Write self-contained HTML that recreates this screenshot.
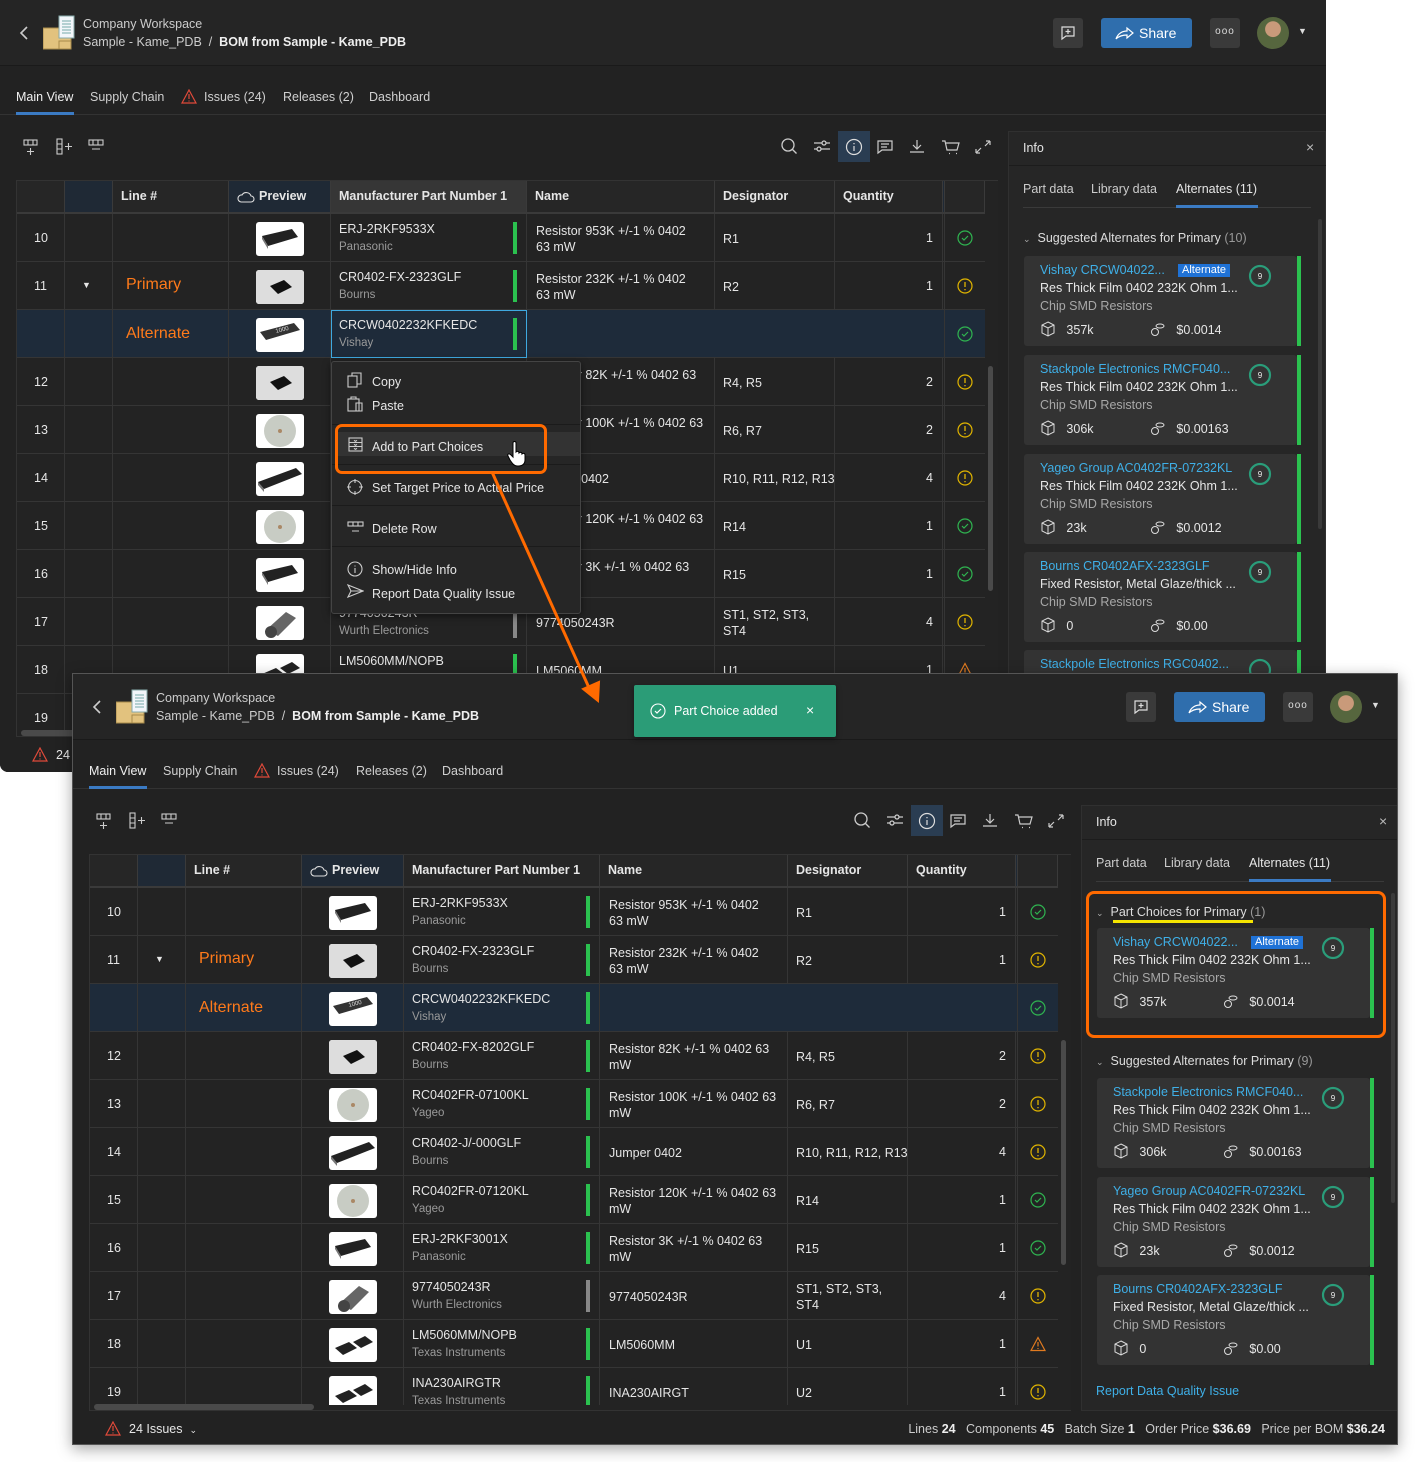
<!DOCTYPE html>
<html><head><meta charset="utf-8">
<style>
*{box-sizing:border-box;margin:0;padding:0}
body{width:1415px;height:1462px;background:#fff;position:relative;overflow:hidden;font-family:"Liberation Sans",sans-serif;font-size:12.5px;color:#e6e6e6}
.win{position:absolute;width:1326px;height:772px;background:#222;overflow:hidden}
.a{position:absolute;white-space:nowrap}
.hdr{position:absolute;left:0;top:0;width:1326px;height:66px;background:#252525;border-bottom:1px solid #1a1a1a}
.btn{position:absolute;top:18px;height:30px;border-radius:3px;background:#3a3a3a}
.tabs span{position:absolute;top:90px;color:#d0d0d0;font-size:12.5px}
.tbl{position:absolute;left:16px;top:180px;width:982px;height:557px;border:1px solid #333;border-right:none;background:#232323}
.th{position:absolute;top:0;height:33px;border-right:1px solid #3a3a3a;border-bottom:2px solid #3a3a3a;background:#262626;font-weight:bold;font-size:12.5px;line-height:31px;padding-left:8px}
.body{position:absolute;left:0;top:33px;width:968px;height:517px;overflow:hidden}
.r{position:absolute;left:0;width:968px;height:48px;border-bottom:1px solid #353535}
.r.sel{background:#1e2b3a}
.c{position:absolute;top:0;height:48px;border-right:1px solid #353535}
.num{position:absolute;left:17px;top:17px}
.mp{position:absolute;left:322px;top:8px;font-size:12.5px}
.mf{position:absolute;left:322px;top:27px;font-size:11.5px;color:#9a9a9a}
.bar{position:absolute;left:496px;top:8px;width:4px;height:32px;background:#2bc14f}
.nm{position:absolute;left:519px;font-size:12.5px;line-height:16px}
.ds{position:absolute;left:706px;font-size:12.5px;line-height:16px}
.qt{position:absolute;left:826px;width:90px;text-align:right;top:17px}
.st{position:absolute;left:940px;top:16px}
.th-img{position:absolute;left:239px;top:8px;width:48px;height:34px;background:#fff;border-radius:3px;overflow:hidden}
.pnl{position:absolute;left:1008px;top:131px;width:318px;height:606px;background:#262626;border:1px solid #303030}
.card{position:absolute;left:15px;width:273px;height:90px;background:#333;border-radius:3px}
.card .g{position:absolute;right:-4px;top:0;width:4px;height:100%;background:#2bc14f}
.card .t{position:absolute;left:16px;top:7px;color:#3fb0e8;font-size:12.5px}
.card .d{position:absolute;left:16px;top:25px;font-size:12.5px}
.card .k{position:absolute;left:16px;top:43px;color:#a8a8a8;font-size:12.5px}
.card .b{position:absolute;left:154px;top:8px;background:#1f72d6;color:#fff;font-size:11px;padding:0 4px;line-height:13px}
.card .s{position:absolute;left:224px;top:8px}
.card .q{position:absolute;left:16px;top:65px}
.ft{position:absolute;left:0;top:737px;width:1326px;height:35px;background:#222}
</style></head><body>

<!-- ================= WINDOW 1 ================= -->
<div class="win" style="left:0;top:0;border-bottom-left-radius:8px">
 <div class="hdr">
  <svg class="a" style="left:18px;top:25px" width="12" height="16"><path d="M9 2 L3 8 L9 14" stroke="#ccc" stroke-width="1.6" fill="none"/></svg>
  <svg class="a" style="left:43px;top:15px" width="34" height="36"><rect x="0" y="13" width="28" height="21" fill="#e2c27e" stroke="#a88a4a"/><rect x="16" y="26" width="12" height="8" fill="#e2c27e" stroke="#a88a4a"/><rect x="16" y="1" width="15" height="22" fill="#f2f6fa" stroke="#8aa"/><path d="M19 6h9M19 9h9M19 12h9M19 15h9M19 18h9" stroke="#7aa" stroke-width="1"/></svg>
  <div class="a" style="left:83px;top:17px;color:#ccc">Company Workspace</div>
  <div class="a" style="left:83px;top:35px;color:#ccc">Sample - Kame_PDB &nbsp;/&nbsp; <b style="color:#eee">BOM from Sample - Kame_PDB</b></div>
  <div class="btn" style="left:1053px;width:30px"><svg style="margin:7px" width="16" height="16"><path d="M2 2h12v9H6l-4 3z" stroke="#ddd" fill="none" stroke-width="1.2"/><path d="M8 4v5M5.5 6.5h5" stroke="#ddd" stroke-width="1.2"/></svg></div>
  <div class="btn" style="left:1101px;width:91px;background:#2f6ead;color:#fff;font-size:14px;line-height:30px;padding-left:38px">Share<svg class="a" style="left:14px;top:8px" width="20" height="14"><path d="M1 13c2-6 7-8 11-8V2l6 5-6 5V9c-4 0-8 1-11 4z" stroke="#fff" fill="none" stroke-width="1.2"/></svg></div>
  <div class="btn" style="left:1210px;width:30px;color:#ddd;text-align:center;line-height:28px;font-size:10px;letter-spacing:1px">ooo</div>
  <div class="a" style="left:1257px;top:17px;width:32px;height:32px;border-radius:50%;background:radial-gradient(circle at 50% 38%,#c99a7a 0 30%,#56663e 32% 100%)"></div>
  <div class="a" style="left:1298px;top:26px;font-size:9px;color:#ddd">▼</div>
 </div>
 <div class="tabs">
  <span style="left:16px;color:#f0f0f0">Main View</span>
  <span style="left:90px">Supply Chain</span>
  <svg class="a" style="left:181px;top:89px" width="16" height="15"><path d="M8 1L15 14H1z" stroke="#e04a3a" fill="none" stroke-width="1.2"/><path d="M8 5v5M8 11.5v1" stroke="#e04a3a" stroke-width="1.2"/></svg>
  <span style="left:204px">Issues (24)</span>
  <span style="left:283px">Releases (2)</span>
  <span style="left:369px">Dashboard</span>
 </div>
 <div class="a" style="left:0;top:114px;width:1326px;height:1px;background:#333"></div>
 <div class="a" style="left:16px;top:112px;width:58px;height:3px;background:#3b7bc4"></div>
 <!-- toolbar -->
 <svg class="a" style="left:22px;top:138px" width="90" height="18" stroke="#ccc" fill="none" stroke-width="1.1"><rect x="2" y="2" width="13" height="5"/><path d="M6 2v5M11 2v5M8.5 10v7M5 13.5h7"/><rect x="35" y="1" width="5" height="15"/><path d="M35 6h5M35 11h5M43 8.5h7M46.5 5v7"/><rect x="67" y="2" width="14" height="5"/><path d="M71 2v5M76 2v5M70 11h8"/></svg>
 <svg class="a" style="left:780px;top:137px" width="215" height="20" stroke="#ccc" fill="none" stroke-width="1.3">
  <circle cx="8" cy="8" r="6"/><path d="M12.5 12.5l4 4"/>
  <path d="M34 6h16M34 12h16"/><circle cx="44" cy="6" r="2" fill="#222"/><circle cx="39" cy="12" r="2" fill="#222"/>
 </svg>
 <div class="a" style="left:838px;top:131px;width:32px;height:31px;background:#2a3d52"></div>
 <svg class="a" style="left:845px;top:138px" width="18" height="18" stroke="#ddd" fill="none" stroke-width="1.2"><circle cx="9" cy="9" r="7.5"/><path d="M9 8v5M9 5v1.2"/></svg>
 <svg class="a" style="left:876px;top:138px" width="120" height="18" stroke="#ccc" fill="none" stroke-width="1.2"><path d="M2 3h14v9H6l-4 3zM5 6h8M5 9h6"/><path d="M41 2v9M37 7l4 4 4-4M34 14h14"/><path d="M66 3h3l2 9h10l2-7H70M73 15.5h1M80 15.5h1"/><path d="M100 15l5-5M100 15v-4M100 15h4M114 3l-5 5M114 3v4M114 3h-4"/></svg>

 <!-- table -->
 <div class="tbl">
  <div class="th" style="left:0;width:48px"></div>
  <div class="th" style="left:48px;width:48px;background:#1f2935"></div>
  <div class="th" style="left:96px;width:116px;padding-left:8px">Line #</div>
  <div class="th" style="left:212px;width:102px;background:#1f2935;padding-left:30px">Preview<svg class="a" style="left:8px;top:9px" width="18" height="14"><path d="M4 12h10a3 3 0 0 0 0-6 5 5 0 0 0-9-1 3.5 3.5 0 0 0-1 7z" stroke="#ddd" fill="none" stroke-width="1.1"/></svg></div>
  <div class="th" style="left:314px;width:196px;background:#363636">Manufacturer Part Number 1</div>
  <div class="th" style="left:510px;width:188px">Name</div>
  <div class="th" style="left:698px;width:120px">Designator</div>
  <div class="th" style="left:818px;width:108px">Quantity</div>
  <div class="th" style="left:926px;width:2px;background:#1f2935;padding:0"></div>
  <div class="th" style="left:928px;width:40px"></div>
  <div class="body">
   <div class="r" style="top:0"><div class="c" style="left:0;width:48px"></div><div class="c" style="left:48px;width:48px"></div><div class="c" style="left:96px;width:116px"></div><div class="c" style="left:212px;width:102px"></div><div class="c" style="left:314px;width:196px"></div><div class="c" style="left:510px;width:188px"></div><div class="c" style="left:698px;width:120px"></div><div class="c" style="left:818px;width:108px"></div><div class="c" style="left:926px;width:2px"></div>
    <span class="num">10</span><div class="th-img"><svg width="48" height="34"><path d="M6 14l30-7 6 8-30 9z" fill="#222"/><path d="M6 14l6 10v3L6 17z" fill="#777"/></svg></div><span class="mp">ERJ-2RKF9533X</span><span class="mf">Panasonic</span><div class="bar"></div><span class="nm" style="top:9px">Resistor 953K +/-1 % 0402<br>63 mW</span><span class="ds" style="top:17px">R1</span><span class="qt">1</span><svg class="st" width="16" height="16"><circle cx="8" cy="8" r="7" stroke="#2fb450" fill="none" stroke-width="1.2"/><path d="M5 8l2 2 4-4" stroke="#2fb450" fill="none" stroke-width="1.2"/></svg></div>
   <div class="r" style="top:48px"><div class="c" style="left:0;width:48px"></div><div class="c" style="left:48px;width:48px"></div><div class="c" style="left:96px;width:116px"></div><div class="c" style="left:212px;width:102px"></div><div class="c" style="left:314px;width:196px"></div><div class="c" style="left:510px;width:188px"></div><div class="c" style="left:698px;width:120px"></div><div class="c" style="left:818px;width:108px"></div><div class="c" style="left:926px;width:2px"></div>
    <span class="num">11</span><span class="a" style="left:65px;top:18px;font-size:9px">▼</span><span class="a" style="left:109px;top:14px;color:#ff7a1a;font-size:16px">Primary</span><div class="th-img"><svg width="48" height="34"><rect width="48" height="34" fill="#ddd"/><path d="M14 16l14-6 8 7-14 7z" fill="#111"/></svg></div><span class="mp">CR0402-FX-2323GLF</span><span class="mf">Bourns</span><div class="bar"></div><span class="nm" style="top:9px">Resistor 232K +/-1 % 0402<br>63 mW</span><span class="ds" style="top:17px">R2</span><span class="qt">1</span><svg class="st" width="16" height="16"><circle cx="8" cy="8" r="7" stroke="#e0b400" fill="none" stroke-width="1.2"/><path d="M8 4v5M8 11v1.2" stroke="#e0b400" stroke-width="1.3"/></svg></div>
   <div class="r sel" style="top:96px"><div class="c" style="left:0;width:48px"></div><div class="c" style="left:48px;width:48px"></div><div class="c" style="left:96px;width:116px"></div><div class="c" style="left:212px;width:102px"></div><div class="c" style="left:314px;width:196px;border:1px solid #3fa9e0"></div><div class="c" style="left:926px;width:2px"></div>
    <span class="a" style="left:109px;top:15px;color:#ff7a1a;font-size:16px">Alternate</span><div class="th-img"><svg width="48" height="34"><path d="M4 14l34-9 6 7-34 10z" fill="#333"/><text x="20" y="15" font-size="6" fill="#ddd" transform="rotate(-14 20 15)" font-family="Liberation Sans">1000</text></svg></div><span class="mp">CRCW0402232KFKEDC</span><span class="mf">Vishay</span><div class="bar"></div><svg class="st" width="16" height="16"><circle cx="8" cy="8" r="7" stroke="#2fb450" fill="none" stroke-width="1.2"/><path d="M5 8l2 2 4-4" stroke="#2fb450" fill="none" stroke-width="1.2"/></svg></div>
   <div class="r" style="top:144px"><div class="c" style="left:0;width:48px"></div><div class="c" style="left:48px;width:48px"></div><div class="c" style="left:96px;width:116px"></div><div class="c" style="left:212px;width:102px"></div><div class="c" style="left:314px;width:196px"></div><div class="c" style="left:510px;width:188px"></div><div class="c" style="left:698px;width:120px"></div><div class="c" style="left:818px;width:108px"></div><div class="c" style="left:926px;width:2px"></div>
    <span class="num">12</span><div class="th-img"><svg width="48" height="34"><rect width="48" height="34" fill="#ddd"/><path d="M14 16l14-6 8 7-14 7z" fill="#111"/></svg></div><span class="mp">CR0402-FX-8202GLF</span><span class="mf">Bourns</span><div class="bar"></div><span class="nm" style="top:9px">Resistor 82K +/-1 % 0402 63<br>mW</span><span class="ds" style="top:17px">R4, R5</span><span class="qt">2</span><svg class="st" width="16" height="16"><circle cx="8" cy="8" r="7" stroke="#e0b400" fill="none" stroke-width="1.2"/><path d="M8 4v5M8 11v1.2" stroke="#e0b400" stroke-width="1.3"/></svg></div>
   <div class="r" style="top:192px"><div class="c" style="left:0;width:48px"></div><div class="c" style="left:48px;width:48px"></div><div class="c" style="left:96px;width:116px"></div><div class="c" style="left:212px;width:102px"></div><div class="c" style="left:314px;width:196px"></div><div class="c" style="left:510px;width:188px"></div><div class="c" style="left:698px;width:120px"></div><div class="c" style="left:818px;width:108px"></div><div class="c" style="left:926px;width:2px"></div>
    <span class="num">13</span><div class="th-img"><svg width="48" height="34"><circle cx="24" cy="17" r="16" fill="#c8ccc4"/><circle cx="24" cy="17" r="2" fill="#a86"/></svg></div><span class="mp">RC0402FR-07100KL</span><span class="mf">Yageo</span><div class="bar"></div><span class="nm" style="top:9px">Resistor 100K +/-1 % 0402 63<br>mW</span><span class="ds" style="top:17px">R6, R7</span><span class="qt">2</span><svg class="st" width="16" height="16"><circle cx="8" cy="8" r="7" stroke="#e0b400" fill="none" stroke-width="1.2"/><path d="M8 4v5M8 11v1.2" stroke="#e0b400" stroke-width="1.3"/></svg></div>
   <div class="r" style="top:240px"><div class="c" style="left:0;width:48px"></div><div class="c" style="left:48px;width:48px"></div><div class="c" style="left:96px;width:116px"></div><div class="c" style="left:212px;width:102px"></div><div class="c" style="left:314px;width:196px"></div><div class="c" style="left:510px;width:188px"></div><div class="c" style="left:698px;width:120px"></div><div class="c" style="left:818px;width:108px"></div><div class="c" style="left:926px;width:2px"></div>
    <span class="num">14</span><div class="th-img"><svg width="48" height="34"><path d="M2 20l38-14 6 6-38 15z" fill="#222"/><path d="M2 20l6 7v3L2 23z" fill="#777"/></svg></div><span class="mp">CR0402-J/-000GLF</span><span class="mf">Bourns</span><div class="bar"></div><span class="nm" style="top:17px">Jumper 0402</span><span class="ds" style="top:17px">R10, R11, R12, R13</span><span class="qt">4</span><svg class="st" width="16" height="16"><circle cx="8" cy="8" r="7" stroke="#e0b400" fill="none" stroke-width="1.2"/><path d="M8 4v5M8 11v1.2" stroke="#e0b400" stroke-width="1.3"/></svg></div>
   <div class="r" style="top:288px"><div class="c" style="left:0;width:48px"></div><div class="c" style="left:48px;width:48px"></div><div class="c" style="left:96px;width:116px"></div><div class="c" style="left:212px;width:102px"></div><div class="c" style="left:314px;width:196px"></div><div class="c" style="left:510px;width:188px"></div><div class="c" style="left:698px;width:120px"></div><div class="c" style="left:818px;width:108px"></div><div class="c" style="left:926px;width:2px"></div>
    <span class="num">15</span><div class="th-img"><svg width="48" height="34"><circle cx="24" cy="17" r="16" fill="#c8ccc4"/><circle cx="24" cy="17" r="2" fill="#a86"/></svg></div><span class="mp">RC0402FR-07120KL</span><span class="mf">Yageo</span><div class="bar"></div><span class="nm" style="top:9px">Resistor 120K +/-1 % 0402 63<br>mW</span><span class="ds" style="top:17px">R14</span><span class="qt">1</span><svg class="st" width="16" height="16"><circle cx="8" cy="8" r="7" stroke="#2fb450" fill="none" stroke-width="1.2"/><path d="M5 8l2 2 4-4" stroke="#2fb450" fill="none" stroke-width="1.2"/></svg></div>
   <div class="r" style="top:336px"><div class="c" style="left:0;width:48px"></div><div class="c" style="left:48px;width:48px"></div><div class="c" style="left:96px;width:116px"></div><div class="c" style="left:212px;width:102px"></div><div class="c" style="left:314px;width:196px"></div><div class="c" style="left:510px;width:188px"></div><div class="c" style="left:698px;width:120px"></div><div class="c" style="left:818px;width:108px"></div><div class="c" style="left:926px;width:2px"></div>
    <span class="num">16</span><div class="th-img"><svg width="48" height="34"><path d="M6 14l30-7 6 8-30 9z" fill="#222"/><path d="M6 14l6 10v3L6 17z" fill="#777"/></svg></div><span class="mp">ERJ-2RKF3001X</span><span class="mf">Panasonic</span><div class="bar"></div><span class="nm" style="top:9px">Resistor 3K +/-1 % 0402 63<br>mW</span><span class="ds" style="top:17px">R15</span><span class="qt">1</span><svg class="st" width="16" height="16"><circle cx="8" cy="8" r="7" stroke="#2fb450" fill="none" stroke-width="1.2"/><path d="M5 8l2 2 4-4" stroke="#2fb450" fill="none" stroke-width="1.2"/></svg></div>
   <div class="r" style="top:384px"><div class="c" style="left:0;width:48px"></div><div class="c" style="left:48px;width:48px"></div><div class="c" style="left:96px;width:116px"></div><div class="c" style="left:212px;width:102px"></div><div class="c" style="left:314px;width:196px"></div><div class="c" style="left:510px;width:188px"></div><div class="c" style="left:698px;width:120px"></div><div class="c" style="left:818px;width:108px"></div><div class="c" style="left:926px;width:2px"></div>
    <span class="num">17</span><div class="th-img"><svg width="48" height="34"><path d="M10 24l20-18 10 6-18 18z" fill="#666"/><ellipse cx="15" cy="26" rx="6" ry="6" fill="#444"/></svg></div><span class="mp">9774050243R</span><span class="mf">Wurth Electronics</span><div class="bar" style="background:#888"></div><span class="nm" style="top:17px">9774050243R</span><span class="ds" style="top:9px">ST1, ST2, ST3,<br>ST4</span><span class="qt">4</span><svg class="st" width="16" height="16"><circle cx="8" cy="8" r="7" stroke="#e0b400" fill="none" stroke-width="1.2"/><path d="M8 4v5M8 11v1.2" stroke="#e0b400" stroke-width="1.3"/></svg></div>
   <div class="r" style="top:432px"><div class="c" style="left:0;width:48px"></div><div class="c" style="left:48px;width:48px"></div><div class="c" style="left:96px;width:116px"></div><div class="c" style="left:212px;width:102px"></div><div class="c" style="left:314px;width:196px"></div><div class="c" style="left:510px;width:188px"></div><div class="c" style="left:698px;width:120px"></div><div class="c" style="left:818px;width:108px"></div><div class="c" style="left:926px;width:2px"></div>
    <span class="num">18</span><div class="th-img"><svg width="48" height="34"><path d="M6 20l14-6 8 6-14 7z" fill="#222"/><path d="M24 14l12-6 8 6-12 6z" fill="#222"/></svg></div><span class="mp">LM5060MM/NOPB</span><span class="mf">Texas Instruments</span><div class="bar"></div><span class="nm" style="top:17px">LM5060MM</span><span class="ds" style="top:17px">U1</span><span class="qt">1</span><svg class="st" width="16" height="16"><path d="M8 1.5L15 14.5H1z" stroke="#e07a20" fill="none" stroke-width="1.2"/><path d="M8 6v4.5M8 12v1" stroke="#e07a20" stroke-width="1.2"/></svg></div>
   <div class="r" style="top:480px"><div class="c" style="left:0;width:48px"></div><div class="c" style="left:48px;width:48px"></div><div class="c" style="left:96px;width:116px"></div><div class="c" style="left:212px;width:102px"></div><div class="c" style="left:314px;width:196px"></div><div class="c" style="left:510px;width:188px"></div><div class="c" style="left:698px;width:120px"></div><div class="c" style="left:818px;width:108px"></div><div class="c" style="left:926px;width:2px"></div>
    <span class="num">19</span><div class="th-img"><svg width="48" height="34"><path d="M6 20l14-6 8 6-14 7z" fill="#222"/><path d="M24 14l12-6 8 6-12 6z" fill="#222"/></svg></div><span class="mp">INA230AIRGTR</span><span class="mf">Texas Instruments</span><div class="bar"></div><span class="nm" style="top:17px">INA230AIRGT</span><span class="ds" style="top:17px">U2</span><span class="qt">1</span><svg class="st" width="16" height="16"><circle cx="8" cy="8" r="7" stroke="#e0b400" fill="none" stroke-width="1.2"/><path d="M8 4v5M8 11v1.2" stroke="#e0b400" stroke-width="1.3"/></svg></div>
  </div>
  <div class="a" style="left:4px;top:549px;width:290px;height:6px;border-radius:3px;background:#4a4a4a"></div>
  <div class="a" style="left:971px;top:185px;width:5px;height:225px;border-radius:3px;background:#4a4a4a"></div>
 </div>

 <!-- info panel -->
 <div class="pnl">
  <div class="a" style="left:14px;top:9px">Info</div><div class="a" style="left:297px;top:7px;font-size:14px;color:#bbb">×</div>
  <div class="a" style="left:0;top:33px;width:318px;height:1px;background:#1c1c1c"></div>
  <div class="a" style="left:14px;top:50px;color:#ccc">Part data</div><div class="a" style="left:82px;top:50px;color:#ccc">Library data</div><div class="a" style="left:167px;top:50px">Alternates (11)</div>
  <div class="a" style="left:14px;top:75px;width:288px;height:1px;background:#3a3a3a"></div>
  <div class="a" style="left:167px;top:73px;width:82px;height:3px;background:#3b7bc4"></div>
  <div class="a" style="left:309px;top:87px;width:4px;height:310px;border-radius:2px;background:#3a3a3a"></div>
  <div class="a" style="left:14px;top:99px;color:#ddd"><span style="font-size:9px;color:#aaa">&#8964;</span>&nbsp; Suggested Alternates for Primary <span style="color:#999">(10)</span></div>
  <div class="card" style="top:124px"><div class="g"></div><span class="a t">Vishay CRCW04022...</span><span class="a b">Alternate</span><svg class="s" width="24" height="24"><circle cx="12" cy="12" r="10" stroke="#2a9d7a" stroke-width="2.2" fill="none"/><text x="12" y="15" font-size="8" fill="#eee" text-anchor="middle" font-family="Liberation Sans">9</text></svg><span class="a d">Res Thick Film 0402 232K Ohm 1...</span><span class="a k">Chip SMD Resistors</span><span class="a q"><svg width="16" height="16" style="vertical-align:-3px"><path d="M8 1l6 3v8l-6 3-6-3V4zM2 4l6 3 6-3M8 7v8" stroke="#ddd" fill="none"/></svg>&nbsp;&nbsp; 357k<span style="position:absolute;left:110px;white-space:nowrap"><svg width="16" height="16" style="vertical-align:-3px"><ellipse cx="10" cy="5" rx="4" ry="2" stroke="#ddd" fill="none"/><circle cx="5" cy="11" r="3.5" stroke="#ddd" fill="none"/></svg>&nbsp;&nbsp; $0.0014</span></span></div>
  <div class="card" style="top:223px"><div class="g"></div><span class="a t">Stackpole Electronics RMCF040...</span><svg class="s" width="24" height="24"><circle cx="12" cy="12" r="10" stroke="#2a9d7a" stroke-width="2.2" fill="none"/><text x="12" y="15" font-size="8" fill="#eee" text-anchor="middle" font-family="Liberation Sans">9</text></svg><span class="a d">Res Thick Film 0402 232K Ohm 1...</span><span class="a k">Chip SMD Resistors</span><span class="a q"><svg width="16" height="16" style="vertical-align:-3px"><path d="M8 1l6 3v8l-6 3-6-3V4zM2 4l6 3 6-3M8 7v8" stroke="#ddd" fill="none"/></svg>&nbsp;&nbsp; 306k<span style="position:absolute;left:110px;white-space:nowrap"><svg width="16" height="16" style="vertical-align:-3px"><ellipse cx="10" cy="5" rx="4" ry="2" stroke="#ddd" fill="none"/><circle cx="5" cy="11" r="3.5" stroke="#ddd" fill="none"/></svg>&nbsp;&nbsp; $0.00163</span></span></div>
  <div class="card" style="top:322px"><div class="g"></div><span class="a t">Yageo Group AC0402FR-07232KL</span><svg class="s" width="24" height="24"><circle cx="12" cy="12" r="10" stroke="#2a9d7a" stroke-width="2.2" fill="none"/><text x="12" y="15" font-size="8" fill="#eee" text-anchor="middle" font-family="Liberation Sans">9</text></svg><span class="a d">Res Thick Film 0402 232K Ohm 1...</span><span class="a k">Chip SMD Resistors</span><span class="a q"><svg width="16" height="16" style="vertical-align:-3px"><path d="M8 1l6 3v8l-6 3-6-3V4zM2 4l6 3 6-3M8 7v8" stroke="#ddd" fill="none"/></svg>&nbsp;&nbsp; 23k<span style="position:absolute;left:110px;white-space:nowrap"><svg width="16" height="16" style="vertical-align:-3px"><ellipse cx="10" cy="5" rx="4" ry="2" stroke="#ddd" fill="none"/><circle cx="5" cy="11" r="3.5" stroke="#ddd" fill="none"/></svg>&nbsp;&nbsp; $0.0012</span></span></div>
  <div class="card" style="top:420px"><div class="g"></div><span class="a t">Bourns CR0402AFX-2323GLF</span><svg class="s" width="24" height="24"><circle cx="12" cy="12" r="10" stroke="#2a9d7a" stroke-width="2.2" fill="none"/><text x="12" y="15" font-size="8" fill="#eee" text-anchor="middle" font-family="Liberation Sans">9</text></svg><span class="a d">Fixed Resistor, Metal Glaze/thick ...</span><span class="a k">Chip SMD Resistors</span><span class="a q"><svg width="16" height="16" style="vertical-align:-3px"><path d="M8 1l6 3v8l-6 3-6-3V4zM2 4l6 3 6-3M8 7v8" stroke="#ddd" fill="none"/></svg>&nbsp;&nbsp; 0<span style="position:absolute;left:110px;white-space:nowrap"><svg width="16" height="16" style="vertical-align:-3px"><ellipse cx="10" cy="5" rx="4" ry="2" stroke="#ddd" fill="none"/><circle cx="5" cy="11" r="3.5" stroke="#ddd" fill="none"/></svg>&nbsp;&nbsp; $0.00</span></span></div>
  <div class="card" style="top:518px"><div class="g"></div><span class="a t">Stackpole Electronics RGC0402...</span><svg class="s" width="24" height="24"><circle cx="12" cy="12" r="10" stroke="#2a9d7a" stroke-width="2.2" fill="none"/></svg></div>
 </div>
 <div class="ft"><svg class="a" style="left:32px;top:10px" width="16" height="15"><path d="M8 1L15 14H1z" stroke="#e04a3a" fill="none" stroke-width="1.2"/><path d="M8 5v5M8 11.5v1" stroke="#e04a3a" stroke-width="1.2"/></svg><span class="a" style="left:56px;top:11px">24</span></div>
</div>

<!-- context menu overlay on window 1 -->
<div class="a" style="left:331px;top:361px;width:250px;height:253px;background:#262626;border:1px solid #444;border-radius:3px;box-shadow:0 2px 8px rgba(0,0,0,.5)">
 <svg class="a" style="left:15px;top:10px" width="18" height="40" stroke="#ccc" fill="none" stroke-width="1.1"><rect x="1" y="4" width="9" height="11"/><path d="M5 4V1h9v11h-4"/><rect x="1" y="27" width="11" height="12"/><path d="M4 27v-2h5v2M9 31h6v8H9z"/></svg>
 <span class="a" style="left:40px;top:13px">Copy</span><span class="a" style="left:40px;top:37px">Paste</span>
 <div class="a" style="left:0;top:62px;width:248px;height:1px;background:#1b1b1b"></div>
 <div class="a" style="left:4px;top:70px;width:244px;height:24px;background:#333"></div>
 <svg class="a" style="left:16px;top:75px" width="15" height="15" stroke="#ccc" fill="none" stroke-width="1.1"><rect x="1" y="1" width="13" height="13"/><path d="M1 5.5h13M1 9.5h13M6 3.3l1.5 1 1.5-1M6 7.3l1.5 1 1.5-1M6 11.3l1.5 1 1.5-1"/></svg>
 <span class="a" style="left:40px;top:78px">Add to Part Choices</span>
 <div class="a" style="left:0;top:102px;width:248px;height:1px;background:#1b1b1b"></div>
 <svg class="a" style="left:15px;top:117px" width="16" height="16" stroke="#ccc" fill="none" stroke-width="1.1"><circle cx="8" cy="8" r="6.5"/><path d="M8 0v4M8 12v4M0 8h4M12 8h4"/></svg>
 <span class="a" style="left:40px;top:119px">Set Target Price to Actual Price</span>
 <div class="a" style="left:0;top:143px;width:248px;height:1px;background:#1b1b1b"></div>
 <svg class="a" style="left:15px;top:159px" width="17" height="12" stroke="#ccc" fill="none" stroke-width="1.1"><rect x="1" y="1" width="15" height="4"/><path d="M6 1v4M11 1v4M5 10h7"/></svg>
 <span class="a" style="left:40px;top:160px">Delete Row</span>
 <div class="a" style="left:0;top:184px;width:248px;height:1px;background:#1b1b1b"></div>
 <svg class="a" style="left:15px;top:199px" width="17" height="40" stroke="#ccc" fill="none" stroke-width="1.1"><circle cx="8" cy="8" r="7"/><path d="M8 7v5M8 4.5v1"/><path d="M1 24l15 6-15 6 3-6zM4 30h12"/></svg>
 <span class="a" style="left:40px;top:201px">Show/Hide Info</span><span class="a" style="left:40px;top:225px">Report Data Quality Issue</span>
</div>
<div class="a" style="left:335px;top:424px;width:212px;height:50px;border:3px solid #ff6a00;border-radius:7px"></div>
<svg class="a" style="left:505px;top:440px" width="24" height="28"><path d="M8 3c0-2 3-2 3 0v9c1-1 3-1 3 1 1-1 3-1 3 1 1-1 3-1 3 1v5c0 4-3 6-6 6h-2c-3 0-5-3-7-6l-2-4c-1-2 1-3 3-1l2 2z" fill="#fff" stroke="#000" stroke-width="1"/></svg>

<!-- ================= WINDOW 2 ================= -->
<div class="win" style="left:72px;top:673px;box-shadow:0 4px 14px rgba(0,0,0,.35);border:1px solid #555">
 <div class="hdr">
  <svg class="a" style="left:18px;top:25px" width="12" height="16"><path d="M9 2 L3 8 L9 14" stroke="#ccc" stroke-width="1.6" fill="none"/></svg>
  <svg class="a" style="left:43px;top:15px" width="34" height="36"><rect x="0" y="13" width="28" height="21" fill="#e2c27e" stroke="#a88a4a"/><rect x="16" y="26" width="12" height="8" fill="#e2c27e" stroke="#a88a4a"/><rect x="16" y="1" width="15" height="22" fill="#f2f6fa" stroke="#8aa"/><path d="M19 6h9M19 9h9M19 12h9M19 15h9M19 18h9" stroke="#7aa" stroke-width="1"/></svg>
  <div class="a" style="left:83px;top:17px;color:#ccc">Company Workspace</div>
  <div class="a" style="left:83px;top:35px;color:#ccc">Sample - Kame_PDB &nbsp;/&nbsp; <b style="color:#eee">BOM from Sample - Kame_PDB</b></div>
  <div class="btn" style="left:1053px;width:30px"><svg style="margin:7px" width="16" height="16"><path d="M2 2h12v9H6l-4 3z" stroke="#ddd" fill="none" stroke-width="1.2"/><path d="M8 4v5M5.5 6.5h5" stroke="#ddd" stroke-width="1.2"/></svg></div>
  <div class="btn" style="left:1101px;width:91px;background:#2f6ead;color:#fff;font-size:14px;line-height:30px;padding-left:38px">Share<svg class="a" style="left:14px;top:8px" width="20" height="14"><path d="M1 13c2-6 7-8 11-8V2l6 5-6 5V9c-4 0-8 1-11 4z" stroke="#fff" fill="none" stroke-width="1.2"/></svg></div>
  <div class="btn" style="left:1210px;width:30px;color:#ddd;text-align:center;line-height:28px;font-size:10px;letter-spacing:1px">ooo</div>
  <div class="a" style="left:1257px;top:17px;width:32px;height:32px;border-radius:50%;background:radial-gradient(circle at 50% 38%,#c99a7a 0 30%,#56663e 32% 100%)"></div>
  <div class="a" style="left:1298px;top:26px;font-size:9px;color:#ddd">▼</div>
 </div>
 <div class="tabs">
  <span style="left:16px;color:#f0f0f0">Main View</span>
  <span style="left:90px">Supply Chain</span>
  <svg class="a" style="left:181px;top:89px" width="16" height="15"><path d="M8 1L15 14H1z" stroke="#e04a3a" fill="none" stroke-width="1.2"/><path d="M8 5v5M8 11.5v1" stroke="#e04a3a" stroke-width="1.2"/></svg>
  <span style="left:204px">Issues (24)</span>
  <span style="left:283px">Releases (2)</span>
  <span style="left:369px">Dashboard</span>
 </div>
 <div class="a" style="left:0;top:114px;width:1326px;height:1px;background:#333"></div>
 <div class="a" style="left:16px;top:112px;width:58px;height:3px;background:#3b7bc4"></div>
 <svg class="a" style="left:22px;top:138px" width="90" height="18" stroke="#ccc" fill="none" stroke-width="1.1"><rect x="2" y="2" width="13" height="5"/><path d="M6 2v5M11 2v5M8.5 10v7M5 13.5h7"/><rect x="35" y="1" width="5" height="15"/><path d="M35 6h5M35 11h5M43 8.5h7M46.5 5v7"/><rect x="67" y="2" width="14" height="5"/><path d="M71 2v5M76 2v5M70 11h8"/></svg>
 <svg class="a" style="left:780px;top:137px" width="215" height="20" stroke="#ccc" fill="none" stroke-width="1.3">
  <circle cx="8" cy="8" r="6"/><path d="M12.5 12.5l4 4"/>
  <path d="M34 6h16M34 12h16"/><circle cx="44" cy="6" r="2" fill="#222"/><circle cx="39" cy="12" r="2" fill="#222"/>
 </svg>
 <div class="a" style="left:838px;top:131px;width:32px;height:31px;background:#2a3d52"></div>
 <svg class="a" style="left:845px;top:138px" width="18" height="18" stroke="#ddd" fill="none" stroke-width="1.2"><circle cx="9" cy="9" r="7.5"/><path d="M9 8v5M9 5v1.2"/></svg>
 <svg class="a" style="left:876px;top:138px" width="120" height="18" stroke="#ccc" fill="none" stroke-width="1.2"><path d="M2 3h14v9H6l-4 3zM5 6h8M5 9h6"/><path d="M41 2v9M37 7l4 4 4-4M34 14h14"/><path d="M66 3h3l2 9h10l2-7H70M73 15.5h1M80 15.5h1"/><path d="M100 15l5-5M100 15v-4M100 15h4M114 3l-5 5M114 3v4M114 3h-4"/></svg>

 <div class="tbl">
  <div class="th" style="left:0;width:48px"></div>
  <div class="th" style="left:48px;width:48px;background:#1f2935"></div>
  <div class="th" style="left:96px;width:116px">Line #</div>
  <div class="th" style="left:212px;width:102px;background:#1f2935;padding-left:30px">Preview<svg class="a" style="left:8px;top:9px" width="18" height="14"><path d="M4 12h10a3 3 0 0 0 0-6 5 5 0 0 0-9-1 3.5 3.5 0 0 0-1 7z" stroke="#ddd" fill="none" stroke-width="1.1"/></svg></div>
  <div class="th" style="left:314px;width:196px;background:#262626">Manufacturer Part Number 1</div>
  <div class="th" style="left:510px;width:188px">Name</div>
  <div class="th" style="left:698px;width:120px">Designator</div>
  <div class="th" style="left:818px;width:108px">Quantity</div>
  <div class="th" style="left:926px;width:2px;background:#1f2935;padding:0"></div>
  <div class="th" style="left:928px;width:40px"></div>
  <div class="body">
   <div class="r" style="top:0"><div class="c" style="left:0;width:48px"></div><div class="c" style="left:48px;width:48px"></div><div class="c" style="left:96px;width:116px"></div><div class="c" style="left:212px;width:102px"></div><div class="c" style="left:314px;width:196px"></div><div class="c" style="left:510px;width:188px"></div><div class="c" style="left:698px;width:120px"></div><div class="c" style="left:818px;width:108px"></div><div class="c" style="left:926px;width:2px"></div>
    <span class="num">10</span><div class="th-img"><svg width="48" height="34"><path d="M6 14l30-7 6 8-30 9z" fill="#222"/><path d="M6 14l6 10v3L6 17z" fill="#777"/></svg></div><span class="mp">ERJ-2RKF9533X</span><span class="mf">Panasonic</span><div class="bar"></div><span class="nm" style="top:9px">Resistor 953K +/-1 % 0402<br>63 mW</span><span class="ds" style="top:17px">R1</span><span class="qt">1</span><svg class="st" width="16" height="16"><circle cx="8" cy="8" r="7" stroke="#2fb450" fill="none" stroke-width="1.2"/><path d="M5 8l2 2 4-4" stroke="#2fb450" fill="none" stroke-width="1.2"/></svg></div>
   <div class="r" style="top:48px"><div class="c" style="left:0;width:48px"></div><div class="c" style="left:48px;width:48px"></div><div class="c" style="left:96px;width:116px"></div><div class="c" style="left:212px;width:102px"></div><div class="c" style="left:314px;width:196px"></div><div class="c" style="left:510px;width:188px"></div><div class="c" style="left:698px;width:120px"></div><div class="c" style="left:818px;width:108px"></div><div class="c" style="left:926px;width:2px"></div>
    <span class="num">11</span><span class="a" style="left:65px;top:18px;font-size:9px">▼</span><span class="a" style="left:109px;top:14px;color:#ff7a1a;font-size:16px">Primary</span><div class="th-img"><svg width="48" height="34"><rect width="48" height="34" fill="#ddd"/><path d="M14 16l14-6 8 7-14 7z" fill="#111"/></svg></div><span class="mp">CR0402-FX-2323GLF</span><span class="mf">Bourns</span><div class="bar"></div><span class="nm" style="top:9px">Resistor 232K +/-1 % 0402<br>63 mW</span><span class="ds" style="top:17px">R2</span><span class="qt">1</span><svg class="st" width="16" height="16"><circle cx="8" cy="8" r="7" stroke="#e0b400" fill="none" stroke-width="1.2"/><path d="M8 4v5M8 11v1.2" stroke="#e0b400" stroke-width="1.3"/></svg></div>
   <div class="r sel" style="top:96px"><div class="c" style="left:0;width:48px"></div><div class="c" style="left:48px;width:48px"></div><div class="c" style="left:96px;width:116px"></div><div class="c" style="left:212px;width:102px"></div><div class="c" style="left:314px;width:196px"></div><div class="c" style="left:926px;width:2px"></div>
    <span class="a" style="left:109px;top:15px;color:#ff7a1a;font-size:16px">Alternate</span><div class="th-img"><svg width="48" height="34"><path d="M4 14l34-9 6 7-34 10z" fill="#333"/><text x="20" y="15" font-size="6" fill="#ddd" transform="rotate(-14 20 15)" font-family="Liberation Sans">1000</text></svg></div><span class="mp">CRCW0402232KFKEDC</span><span class="mf">Vishay</span><div class="bar"></div><svg class="st" width="16" height="16"><circle cx="8" cy="8" r="7" stroke="#2fb450" fill="none" stroke-width="1.2"/><path d="M5 8l2 2 4-4" stroke="#2fb450" fill="none" stroke-width="1.2"/></svg></div>
   <div class="r" style="top:144px"><div class="c" style="left:0;width:48px"></div><div class="c" style="left:48px;width:48px"></div><div class="c" style="left:96px;width:116px"></div><div class="c" style="left:212px;width:102px"></div><div class="c" style="left:314px;width:196px"></div><div class="c" style="left:510px;width:188px"></div><div class="c" style="left:698px;width:120px"></div><div class="c" style="left:818px;width:108px"></div><div class="c" style="left:926px;width:2px"></div>
    <span class="num">12</span><div class="th-img"><svg width="48" height="34"><rect width="48" height="34" fill="#ddd"/><path d="M14 16l14-6 8 7-14 7z" fill="#111"/></svg></div><span class="mp">CR0402-FX-8202GLF</span><span class="mf">Bourns</span><div class="bar"></div><span class="nm" style="top:9px">Resistor 82K +/-1 % 0402 63<br>mW</span><span class="ds" style="top:17px">R4, R5</span><span class="qt">2</span><svg class="st" width="16" height="16"><circle cx="8" cy="8" r="7" stroke="#e0b400" fill="none" stroke-width="1.2"/><path d="M8 4v5M8 11v1.2" stroke="#e0b400" stroke-width="1.3"/></svg></div>
   <div class="r" style="top:192px"><div class="c" style="left:0;width:48px"></div><div class="c" style="left:48px;width:48px"></div><div class="c" style="left:96px;width:116px"></div><div class="c" style="left:212px;width:102px"></div><div class="c" style="left:314px;width:196px"></div><div class="c" style="left:510px;width:188px"></div><div class="c" style="left:698px;width:120px"></div><div class="c" style="left:818px;width:108px"></div><div class="c" style="left:926px;width:2px"></div>
    <span class="num">13</span><div class="th-img"><svg width="48" height="34"><circle cx="24" cy="17" r="16" fill="#c8ccc4"/><circle cx="24" cy="17" r="2" fill="#a86"/></svg></div><span class="mp">RC0402FR-07100KL</span><span class="mf">Yageo</span><div class="bar"></div><span class="nm" style="top:9px">Resistor 100K +/-1 % 0402 63<br>mW</span><span class="ds" style="top:17px">R6, R7</span><span class="qt">2</span><svg class="st" width="16" height="16"><circle cx="8" cy="8" r="7" stroke="#e0b400" fill="none" stroke-width="1.2"/><path d="M8 4v5M8 11v1.2" stroke="#e0b400" stroke-width="1.3"/></svg></div>
   <div class="r" style="top:240px"><div class="c" style="left:0;width:48px"></div><div class="c" style="left:48px;width:48px"></div><div class="c" style="left:96px;width:116px"></div><div class="c" style="left:212px;width:102px"></div><div class="c" style="left:314px;width:196px"></div><div class="c" style="left:510px;width:188px"></div><div class="c" style="left:698px;width:120px"></div><div class="c" style="left:818px;width:108px"></div><div class="c" style="left:926px;width:2px"></div>
    <span class="num">14</span><div class="th-img"><svg width="48" height="34"><path d="M2 20l38-14 6 6-38 15z" fill="#222"/><path d="M2 20l6 7v3L2 23z" fill="#777"/></svg></div><span class="mp">CR0402-J/-000GLF</span><span class="mf">Bourns</span><div class="bar"></div><span class="nm" style="top:17px">Jumper 0402</span><span class="ds" style="top:17px">R10, R11, R12, R13</span><span class="qt">4</span><svg class="st" width="16" height="16"><circle cx="8" cy="8" r="7" stroke="#e0b400" fill="none" stroke-width="1.2"/><path d="M8 4v5M8 11v1.2" stroke="#e0b400" stroke-width="1.3"/></svg></div>
   <div class="r" style="top:288px"><div class="c" style="left:0;width:48px"></div><div class="c" style="left:48px;width:48px"></div><div class="c" style="left:96px;width:116px"></div><div class="c" style="left:212px;width:102px"></div><div class="c" style="left:314px;width:196px"></div><div class="c" style="left:510px;width:188px"></div><div class="c" style="left:698px;width:120px"></div><div class="c" style="left:818px;width:108px"></div><div class="c" style="left:926px;width:2px"></div>
    <span class="num">15</span><div class="th-img"><svg width="48" height="34"><circle cx="24" cy="17" r="16" fill="#c8ccc4"/><circle cx="24" cy="17" r="2" fill="#a86"/></svg></div><span class="mp">RC0402FR-07120KL</span><span class="mf">Yageo</span><div class="bar"></div><span class="nm" style="top:9px">Resistor 120K +/-1 % 0402 63<br>mW</span><span class="ds" style="top:17px">R14</span><span class="qt">1</span><svg class="st" width="16" height="16"><circle cx="8" cy="8" r="7" stroke="#2fb450" fill="none" stroke-width="1.2"/><path d="M5 8l2 2 4-4" stroke="#2fb450" fill="none" stroke-width="1.2"/></svg></div>
   <div class="r" style="top:336px"><div class="c" style="left:0;width:48px"></div><div class="c" style="left:48px;width:48px"></div><div class="c" style="left:96px;width:116px"></div><div class="c" style="left:212px;width:102px"></div><div class="c" style="left:314px;width:196px"></div><div class="c" style="left:510px;width:188px"></div><div class="c" style="left:698px;width:120px"></div><div class="c" style="left:818px;width:108px"></div><div class="c" style="left:926px;width:2px"></div>
    <span class="num">16</span><div class="th-img"><svg width="48" height="34"><path d="M6 14l30-7 6 8-30 9z" fill="#222"/><path d="M6 14l6 10v3L6 17z" fill="#777"/></svg></div><span class="mp">ERJ-2RKF3001X</span><span class="mf">Panasonic</span><div class="bar"></div><span class="nm" style="top:9px">Resistor 3K +/-1 % 0402 63<br>mW</span><span class="ds" style="top:17px">R15</span><span class="qt">1</span><svg class="st" width="16" height="16"><circle cx="8" cy="8" r="7" stroke="#2fb450" fill="none" stroke-width="1.2"/><path d="M5 8l2 2 4-4" stroke="#2fb450" fill="none" stroke-width="1.2"/></svg></div>
   <div class="r" style="top:384px"><div class="c" style="left:0;width:48px"></div><div class="c" style="left:48px;width:48px"></div><div class="c" style="left:96px;width:116px"></div><div class="c" style="left:212px;width:102px"></div><div class="c" style="left:314px;width:196px"></div><div class="c" style="left:510px;width:188px"></div><div class="c" style="left:698px;width:120px"></div><div class="c" style="left:818px;width:108px"></div><div class="c" style="left:926px;width:2px"></div>
    <span class="num">17</span><div class="th-img"><svg width="48" height="34"><path d="M10 24l20-18 10 6-18 18z" fill="#666"/><ellipse cx="15" cy="26" rx="6" ry="6" fill="#444"/></svg></div><span class="mp">9774050243R</span><span class="mf">Wurth Electronics</span><div class="bar" style="background:#888"></div><span class="nm" style="top:17px">9774050243R</span><span class="ds" style="top:9px">ST1, ST2, ST3,<br>ST4</span><span class="qt">4</span><svg class="st" width="16" height="16"><circle cx="8" cy="8" r="7" stroke="#e0b400" fill="none" stroke-width="1.2"/><path d="M8 4v5M8 11v1.2" stroke="#e0b400" stroke-width="1.3"/></svg></div>
   <div class="r" style="top:432px"><div class="c" style="left:0;width:48px"></div><div class="c" style="left:48px;width:48px"></div><div class="c" style="left:96px;width:116px"></div><div class="c" style="left:212px;width:102px"></div><div class="c" style="left:314px;width:196px"></div><div class="c" style="left:510px;width:188px"></div><div class="c" style="left:698px;width:120px"></div><div class="c" style="left:818px;width:108px"></div><div class="c" style="left:926px;width:2px"></div>
    <span class="num">18</span><div class="th-img"><svg width="48" height="34"><path d="M6 20l14-6 8 6-14 7z" fill="#222"/><path d="M24 14l12-6 8 6-12 6z" fill="#222"/></svg></div><span class="mp">LM5060MM/NOPB</span><span class="mf">Texas Instruments</span><div class="bar"></div><span class="nm" style="top:17px">LM5060MM</span><span class="ds" style="top:17px">U1</span><span class="qt">1</span><svg class="st" width="16" height="16"><path d="M8 1.5L15 14.5H1z" stroke="#e07a20" fill="none" stroke-width="1.2"/><path d="M8 6v4.5M8 12v1" stroke="#e07a20" stroke-width="1.2"/></svg></div>
   <div class="r" style="top:480px"><div class="c" style="left:0;width:48px"></div><div class="c" style="left:48px;width:48px"></div><div class="c" style="left:96px;width:116px"></div><div class="c" style="left:212px;width:102px"></div><div class="c" style="left:314px;width:196px"></div><div class="c" style="left:510px;width:188px"></div><div class="c" style="left:698px;width:120px"></div><div class="c" style="left:818px;width:108px"></div><div class="c" style="left:926px;width:2px"></div>
    <span class="num">19</span><div class="th-img"><svg width="48" height="34"><path d="M6 20l14-6 8 6-14 7z" fill="#222"/><path d="M24 14l12-6 8 6-12 6z" fill="#222"/></svg></div><span class="mp">INA230AIRGTR</span><span class="mf">Texas Instruments</span><div class="bar"></div><span class="nm" style="top:17px">INA230AIRGT</span><span class="ds" style="top:17px">U2</span><span class="qt">1</span><svg class="st" width="16" height="16"><circle cx="8" cy="8" r="7" stroke="#e0b400" fill="none" stroke-width="1.2"/><path d="M8 4v5M8 11v1.2" stroke="#e0b400" stroke-width="1.3"/></svg></div>
  </div>
  <div class="a" style="left:4px;top:549px;width:220px;height:6px;border-radius:3px;background:#4a4a4a"></div>
  <div class="a" style="left:971px;top:185px;width:5px;height:225px;border-radius:3px;background:#4a4a4a"></div>
 </div>

 <div class="pnl">
  <div class="a" style="left:14px;top:9px">Info</div><div class="a" style="left:297px;top:7px;font-size:14px;color:#bbb">×</div>
  <div class="a" style="left:0;top:33px;width:318px;height:1px;background:#1c1c1c"></div>
  <div class="a" style="left:14px;top:50px;color:#ccc">Part data</div><div class="a" style="left:82px;top:50px;color:#ccc">Library data</div><div class="a" style="left:167px;top:50px">Alternates (11)</div>
  <div class="a" style="left:14px;top:75px;width:288px;height:1px;background:#3a3a3a"></div>
  <div class="a" style="left:167px;top:73px;width:82px;height:3px;background:#3b7bc4"></div>
  <div class="a" style="left:309px;top:87px;width:4px;height:310px;border-radius:2px;background:#3a3a3a"></div>
  <div class="a" style="left:4px;top:85px;width:300px;height:147px;border:3px solid #ff6a00;border-radius:8px"></div>
  <div class="a" style="left:14px;top:99px;color:#ddd"><span style="font-size:9px;color:#aaa">&#8964;</span>&nbsp; Part Choices for Primary <span style="color:#999">(1)</span></div>
  <div class="a" style="left:31px;top:114px;width:140px;height:3px;background:#f5e400"></div>
  <div class="card" style="top:122px"><div class="g"></div><span class="a t">Vishay CRCW04022...</span><span class="a b">Alternate</span><svg class="s" width="24" height="24"><circle cx="12" cy="12" r="10" stroke="#2a9d7a" stroke-width="2.2" fill="none"/><text x="12" y="15" font-size="8" fill="#eee" text-anchor="middle" font-family="Liberation Sans">9</text></svg><span class="a d">Res Thick Film 0402 232K Ohm 1...</span><span class="a k">Chip SMD Resistors</span><span class="a q"><svg width="16" height="16" style="vertical-align:-3px"><path d="M8 1l6 3v8l-6 3-6-3V4zM2 4l6 3 6-3M8 7v8" stroke="#ddd" fill="none"/></svg>&nbsp;&nbsp; 357k<span style="position:absolute;left:110px;white-space:nowrap"><svg width="16" height="16" style="vertical-align:-3px"><ellipse cx="10" cy="5" rx="4" ry="2" stroke="#ddd" fill="none"/><circle cx="5" cy="11" r="3.5" stroke="#ddd" fill="none"/></svg>&nbsp;&nbsp; $0.0014</span></span></div>
  <div class="a" style="left:14px;top:248px;color:#ddd"><span style="font-size:9px;color:#aaa">&#8964;</span>&nbsp; Suggested Alternates for Primary <span style="color:#999">(9)</span></div>
  <div class="card" style="top:272px"><div class="g"></div><span class="a t">Stackpole Electronics RMCF040...</span><svg class="s" width="24" height="24"><circle cx="12" cy="12" r="10" stroke="#2a9d7a" stroke-width="2.2" fill="none"/><text x="12" y="15" font-size="8" fill="#eee" text-anchor="middle" font-family="Liberation Sans">9</text></svg><span class="a d">Res Thick Film 0402 232K Ohm 1...</span><span class="a k">Chip SMD Resistors</span><span class="a q"><svg width="16" height="16" style="vertical-align:-3px"><path d="M8 1l6 3v8l-6 3-6-3V4zM2 4l6 3 6-3M8 7v8" stroke="#ddd" fill="none"/></svg>&nbsp;&nbsp; 306k<span style="position:absolute;left:110px;white-space:nowrap"><svg width="16" height="16" style="vertical-align:-3px"><ellipse cx="10" cy="5" rx="4" ry="2" stroke="#ddd" fill="none"/><circle cx="5" cy="11" r="3.5" stroke="#ddd" fill="none"/></svg>&nbsp;&nbsp; $0.00163</span></span></div>
  <div class="card" style="top:371px"><div class="g"></div><span class="a t">Yageo Group AC0402FR-07232KL</span><svg class="s" width="24" height="24"><circle cx="12" cy="12" r="10" stroke="#2a9d7a" stroke-width="2.2" fill="none"/><text x="12" y="15" font-size="8" fill="#eee" text-anchor="middle" font-family="Liberation Sans">9</text></svg><span class="a d">Res Thick Film 0402 232K Ohm 1...</span><span class="a k">Chip SMD Resistors</span><span class="a q"><svg width="16" height="16" style="vertical-align:-3px"><path d="M8 1l6 3v8l-6 3-6-3V4zM2 4l6 3 6-3M8 7v8" stroke="#ddd" fill="none"/></svg>&nbsp;&nbsp; 23k<span style="position:absolute;left:110px;white-space:nowrap"><svg width="16" height="16" style="vertical-align:-3px"><ellipse cx="10" cy="5" rx="4" ry="2" stroke="#ddd" fill="none"/><circle cx="5" cy="11" r="3.5" stroke="#ddd" fill="none"/></svg>&nbsp;&nbsp; $0.0012</span></span></div>
  <div class="card" style="top:469px"><div class="g"></div><span class="a t">Bourns CR0402AFX-2323GLF</span><svg class="s" width="24" height="24"><circle cx="12" cy="12" r="10" stroke="#2a9d7a" stroke-width="2.2" fill="none"/><text x="12" y="15" font-size="8" fill="#eee" text-anchor="middle" font-family="Liberation Sans">9</text></svg><span class="a d">Fixed Resistor, Metal Glaze/thick ...</span><span class="a k">Chip SMD Resistors</span><span class="a q"><svg width="16" height="16" style="vertical-align:-3px"><path d="M8 1l6 3v8l-6 3-6-3V4zM2 4l6 3 6-3M8 7v8" stroke="#ddd" fill="none"/></svg>&nbsp;&nbsp; 0<span style="position:absolute;left:110px;white-space:nowrap"><svg width="16" height="16" style="vertical-align:-3px"><ellipse cx="10" cy="5" rx="4" ry="2" stroke="#ddd" fill="none"/><circle cx="5" cy="11" r="3.5" stroke="#ddd" fill="none"/></svg>&nbsp;&nbsp; $0.00</span></span></div>
  <div class="a" style="left:14px;top:578px;color:#3fb0e8">Report Data Quality Issue</div>
 </div>
 <div class="ft">
  <svg class="a" style="left:32px;top:10px" width="16" height="15"><path d="M8 1L15 14H1z" stroke="#e04a3a" fill="none" stroke-width="1.2"/><path d="M8 5v5M8 11.5v1" stroke="#e04a3a" stroke-width="1.2"/></svg>
  <span class="a" style="left:56px;top:11px">24 Issues &nbsp;<span style="font-size:9px">&#8964;</span></span>
  <span class="a" style="right:14px;top:11px;color:#ccc">Lines <b style="color:#eee">24</b> &nbsp; Components <b style="color:#eee">45</b> &nbsp; Batch Size <b style="color:#eee">1</b> &nbsp; Order Price <b style="color:#eee">$36.69</b> &nbsp; Price per BOM <b style="color:#eee">$36.24</b></span>
 </div>
</div>

<!-- arrow -->
<svg class="a" style="left:0;top:0" width="1415" height="1462"><path d="M492 472 L590 690" stroke="#ff6a00" stroke-width="3" fill="none"/><path d="M583 689 L598 701 L599 682 Z" fill="#ff6a00" stroke="#ff6a00" stroke-width="2"/></svg>

<!-- toast -->
<div class="a" style="left:634px;top:685px;width:202px;height:52px;background:#2b9c77;border-radius:2px;box-shadow:0 2px 6px rgba(0,0,0,.4)">
 <svg class="a" style="left:16px;top:18px" width="16" height="16"><circle cx="8" cy="8" r="7" stroke="#fff" fill="none" stroke-width="1.1"/><path d="M5 8l2 2 4-4" stroke="#fff" fill="none" stroke-width="1.2"/></svg>
 <span class="a" style="left:40px;top:19px;color:#fff">Part Choice added</span>
 <span class="a" style="left:172px;top:17px;color:#fff;font-size:14px">×</span>
</div>
</body></html>
